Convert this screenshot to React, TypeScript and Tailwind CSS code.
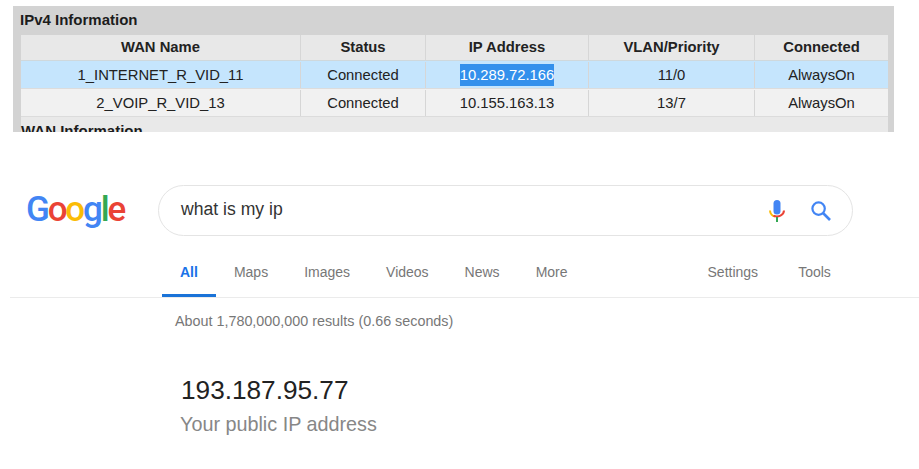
const columns = [
  { label: 'WAN Name', width: 'w-[280px]' },
  { label: 'Status', width: 'w-[125px]' },
  { label: 'IP Address', width: 'w-[163px]' },
  { label: 'VLAN/Priority', width: 'w-[166px]' },
  { label: 'Connected', width: 'flex-1' },
]

const rows = [
  ['1_INTERNET_R_VID_11', 'Connected', '10.289.72.166', '11/0', 'AlwaysOn'],
  ['2_VOIP_R_VID_13', 'Connected', '10.155.163.13', '13/7', 'AlwaysOn'],
]

const leftTabs = ['Maps', 'Images', 'Videos', 'News', 'More']

function Cell({ className, children }: { className: string; children: React.ReactNode }) {
  return (
    <div className={`flex items-center justify-center border-r border-[#d6d6d6] last:border-r-0 ${className}`}>
      {children}
    </div>
  )
}

function MicIcon() {
  return (
    <svg width="16" height="22" viewBox="0 0 16 22" fill="none">
      <rect x="4.5" y="0" width="7" height="14.5" rx="3.5" fill="#4285f4" />
      <path d="M1 10.5c0 3.2 2.6 5.5 5 6" stroke="#fbbc05" strokeWidth="2" />
      <path d="M4.5 15.6c2.2 1.2 4.8 1.2 7 0 2-1.1 3.5-2.9 3.5-5.1" stroke="#ea4335" strokeWidth="2" />
      <rect x="7" y="17" width="2" height="5" fill="#34a853" />
    </svg>
  )
}

function SearchIcon() {
  return (
    <svg width="20" height="20" viewBox="0 0 20 20" fill="none" stroke="#4285f4" strokeWidth="2.2">
      <circle cx="7.6" cy="7.6" r="6.2" />
      <line x1="12" y1="12" x2="19" y2="19" strokeWidth="2.6" />
    </svg>
  )
}

export default function App() {
  return (
    <div className="h-[469px] w-[919px] overflow-hidden bg-white font-['Liberation_Sans',Arial,sans-serif]">
      {/* Router page capture */}
      <div className="ml-[13px] mt-[6px] h-[126px] w-[881px] overflow-hidden bg-[#d3d3d3] pl-[8px] pr-[6px]">
        <div className="-ml-px flex h-[29px] items-center text-[15px] font-bold text-[#1c1c1c]">IPv4 Information</div>
        <div className="text-[14.8px] text-[#222]">
          <div className="flex h-[26px] border-b border-[#cfd8dc] bg-[#e8e8e8] font-bold">
            {columns.map((c) => (
              <Cell key={c.label} className={c.width}>{c.label}</Cell>
            ))}
          </div>
          {rows.map((row, i) => (
            <div
              key={row[0]}
              className={`flex h-[28px] border-b border-[#dcdcdc] pt-px ${i === 0 ? 'bg-[#c5e5fd]' : 'bg-[#f1f1f1]'}`}
            >
              {row.map((value, j) => (
                <Cell key={j} className={columns[j].width}>
                  {i === 0 && j === 2 ? <span className="bg-[#3390ec] text-white">{value}</span> : value}
                </Cell>
              ))}
            </div>
          ))}
          <div className="h-[20px] bg-[#e9e9e9] pt-[6px]">
            <div className="text-[15px] font-bold leading-[16px] text-[#1c1c1c]">WAN Information</div>
          </div>
        </div>
      </div>

      {/* Google results */}
      <div className="mt-[53px] flex items-center">
        <div className="ml-[26px] w-[132px] pb-px font-['Roboto',sans-serif] text-[35px] font-medium leading-[50px] tracking-[-2.2px]">
          <span className="text-[#4285f4]">G</span>
          <span className="text-[#ea4335]">o</span>
          <span className="text-[#fbbc05]">o</span>
          <span className="text-[#4285f4]">g</span>
          <span className="text-[#34a853]">l</span>
          <span className="text-[#ea4335]">e</span>
        </div>
        <div className="flex h-[51px] w-[695px] items-center rounded-full border border-[#e4e4e4] pl-[22px] pr-[21px]">
          <span className="flex-1 pb-[2px] text-[17.6px] text-[#333]">what is my ip</span>
          <div className="mr-[26px] flex"><MicIcon /></div>
          <SearchIcon />
        </div>
      </div>

      <div className="ml-[10px] mt-[21px] flex h-[41px] border-b border-[#ebebeb] pl-[152px] text-[14px] text-[#777]">
        <div className="flex h-[40px] items-center border-b-[3px] border-[#1a73d8] px-[18px] pb-[7px] font-bold text-[#1a73e8]">All</div>
        {leftTabs.map((t) => (
          <div key={t} className="flex items-center px-[18px] pb-[10px]">{t}</div>
        ))}
        <div className="ml-[104px] flex items-center px-[18px] pb-[10px]">Settings</div>
        <div className="flex items-center pl-[22px] pb-[10px]">Tools</div>
      </div>

      <div className="ml-[175px] mt-[13px] text-[14.35px] text-[#777]">About 1,780,000,000 results (0.66 seconds)</div>
      <div className="ml-[181px] mt-[41px] text-[26.2px] leading-[32px] text-[#222]">193.187.95.77</div>
      <div className="ml-[180px] mt-[4px] text-[19.8px] text-[#878787]">Your public IP address</div>
    </div>
  )
}
